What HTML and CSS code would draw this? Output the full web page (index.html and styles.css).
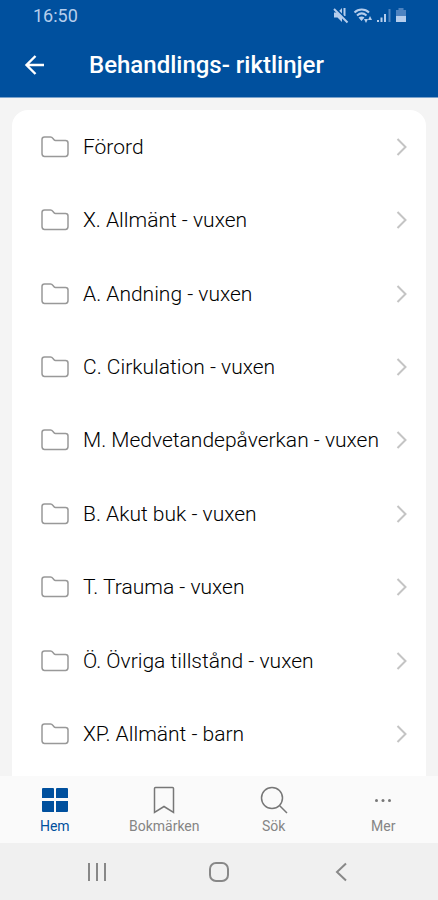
FILE: index.html
```html
<!DOCTYPE html>
<html lang="sv">
<head>
<meta charset="utf-8">
<meta name="viewport" content="width=device-width, initial-scale=1">
<title>Behandlingsriktlinjer</title>
<link rel="stylesheet" href="styles.css">
</head>
<body>
<svg class="defs" aria-hidden="true">
  <symbol id="folder" viewBox="0 0 28 22"><path d="M1 17.5V3.5C1 2 2 1 3.500 1H9.500C10.500 1 11.200 1.400 11.800 2.200L13 3.700C13.400 4.200 13.800 4.400 14.500 4.400H24.500C26 4.400 27 5.400 27 6.900V17.500C27 19.500 26.300 20.400 24.500 20.400H3.500C1.700 20.400 1 19.500 1 17.500Z"/></symbol>
  <symbol id="chevron" viewBox="0 0 12 18"><path d="M1.500 1L9.500 9L1.500 17"/></symbol>
</svg>
<header class="top">
  <div class="status">
    <span class="time">16:50</span>
    <svg class="status-icons" viewBox="0 0 76 18" aria-hidden="true">
      <path class="solid" d="M2 5.500H5.500L10 1V15L5.500 10.500H2ZM11.500 1H13.500V9H11.500Z"/>
      <path class="cut" d="M3 1L16 14"/>
      <path class="slash" d="M2 2L15.500 15.500"/>
      <path class="wave" d="M22.500 5.500C26.500 1.500 33 1.500 37 5.500M25 8.500C28 5.800 31.500 5.800 34.500 8.500"/>
      <path class="solid" d="M26.500 10.500C28.500 9 31 9 32.500 10.500L29.500 14ZM32 12H36L34 16ZM36 13L38 9L40 13Z"/>
      <path class="solid" d="M45 13H47V15H45ZM48.500 10.500H50.500V15H48.500ZM52 7H54V15H52Z"/>
      <path class="dim" d="M56.500 2H58.500V15H56.500ZM64 3H66.500V1H71.500V3H74V9H64Z"/>
      <path class="solid" d="M64 9H74V15H64Z"/>
    </svg>
  </div>
  <div class="bar">
    <button class="back" aria-label="Tillbaka"><svg viewBox="0 0 20 20" aria-hidden="true"><path d="M19.500 10H2M11 1L2 10L11 19"/></svg></button>
    <h1>Behandlings- riktlinjer</h1>
  </div>
</header>
<main>
  <ul class="list">
    <li><a href="#forord"><svg class="folder"><use href="#folder"/></svg><span>Förord</span><svg class="chevron"><use href="#chevron"/></svg></a></li>
    <li><a href="#x"><svg class="folder"><use href="#folder"/></svg><span>X. Allmänt - vuxen</span><svg class="chevron"><use href="#chevron"/></svg></a></li>
    <li><a href="#a"><svg class="folder"><use href="#folder"/></svg><span>A. Andning - vuxen</span><svg class="chevron"><use href="#chevron"/></svg></a></li>
    <li><a href="#c"><svg class="folder"><use href="#folder"/></svg><span>C. Cirkulation - vuxen</span><svg class="chevron"><use href="#chevron"/></svg></a></li>
    <li><a href="#m"><svg class="folder"><use href="#folder"/></svg><span>M. Medvetandepåverkan - vuxen</span><svg class="chevron"><use href="#chevron"/></svg></a></li>
    <li><a href="#b"><svg class="folder"><use href="#folder"/></svg><span>B. Akut buk - vuxen</span><svg class="chevron"><use href="#chevron"/></svg></a></li>
    <li><a href="#t"><svg class="folder"><use href="#folder"/></svg><span>T. Trauma - vuxen</span><svg class="chevron"><use href="#chevron"/></svg></a></li>
    <li><a href="#o"><svg class="folder"><use href="#folder"/></svg><span>Ö. Övriga tillstånd - vuxen</span><svg class="chevron"><use href="#chevron"/></svg></a></li>
    <li><a href="#xp"><svg class="folder"><use href="#folder"/></svg><span>XP. Allmänt - barn</span><svg class="chevron"><use href="#chevron"/></svg></a></li>
  </ul>
</main>
<nav class="tabs">
  <a class="tab active" href="#hem"><svg viewBox="0 0 28 28" aria-hidden="true"><path d="M2 2H12Q13 2 13 3V12H1V3Q1 2 2 2ZM16 2H26Q27 2 27 3V12H15V3Q15 2 16 2ZM1 15H13V26H2Q1 26 1 25ZM15 15H27V25Q27 26 26 26H15Z"/></svg>Hem</a>
  <a class="tab" href="#bokmarken"><svg viewBox="0 0 28 28" aria-hidden="true"><path d="M5.500 1.500H22.500Q23.500 1.500 23.500 2.500V26.500L14 20.500L4.500 26.500V2.500Q4.500 1.500 5.500 1.500Z"/></svg>Bokmärken</a>
  <a class="tab" href="#sok"><svg viewBox="0 0 28 28" aria-hidden="true"><circle cx="12" cy="12" r="10.500"/><path d="M19.500 19.500L27 27"/></svg>Sök</a>
  <a class="tab more" href="#mer"><svg viewBox="0 0 28 28" aria-hidden="true"><circle cx="7.500" cy="14.500" r="1.500"/><circle cx="14" cy="14.500" r="1.500"/><circle cx="20.500" cy="14.500" r="1.500"/></svg>Mer</a>
</nav>
<div class="system">
  <button aria-label="Senaste appar"><svg viewBox="0 0 20 20" aria-hidden="true"><path d="M2 1V19M10 1V19M18 1V19"/></svg></button>
  <button aria-label="Startskärm"><svg viewBox="0 0 20 20" aria-hidden="true"><rect x="1" y="1" width="18" height="18" rx="6"/></svg></button>
  <button aria-label="Bakåt"><svg viewBox="0 0 20 20" aria-hidden="true"><path d="M15 1.500L6 10L15 18.500"/></svg></button>
</div>
</body>
</html>
```
FILE: styles.css
```css
* { box-sizing: border-box; }
body {
  margin: 0;
  min-height: 100vh;
  display: flex;
  flex-direction: column;
  background: #f4f4f4;
  color: #222;
  font-family: Roboto, "Liberation Sans", sans-serif;
}
svg { display: block; fill: none; stroke: currentColor; stroke-width: 2; }
button { padding: 0; border: 0; background: none; color: inherit; }
a { color: inherit; text-decoration: none; }
.defs { display: none; }

.top { background: #00509e; color: #fff; border-bottom: 1px solid #7ba3cc; }
.status {
  height: 32px;
  padding: 0 30px 0 33px;
  display: flex;
  align-items: center;
  justify-content: space-between;
  color: #b5cdec;
}
.time { font-size: 18px; line-height: 32px; }
.status-icons { width: 76px; height: 18px; }
.status-icons .solid { fill: currentColor; stroke: none; }
.status-icons .dim { fill: #4e83c0; stroke: none; }
.status-icons .cut { stroke: #00509e; }
.bar { height: 65px; padding: 0 24px; display: flex; align-items: center; gap: 44px; }
.back svg { width: 21px; height: 20px; stroke-width: 2.400; }
h1 { margin: 0; font-size: 24px; line-height: 32px; font-weight: 500; }

main { flex: 1; display: flex; padding: 12px 12px 0; }
.list {
  flex: 1;
  margin: 0;
  padding: 0 0 5px;
  list-style: none;
  display: grid;
  grid-auto-rows: 1fr;
  background: #fff;
  border-radius: 16px 16px 0 0;
}
.list a { height: 100%; padding: 0 18px 0 29px; display: flex; align-items: center; gap: 14px; }
.list span { flex: 1; font-size: 21px; line-height: 28px; font-weight: 300; white-space: nowrap; color: #000; }
.folder { width: 28px; height: 22px; color: #999; stroke-width: 1.500; }
.chevron { width: 12px; height: 18px; color: #c4c4c4; stroke-width: 2; }

.tabs { height: 67px; display: grid; grid-template-columns: repeat(4, 1fr); background: #fafafa; }
.tab {
  padding-top: 10px;
  display: flex;
  flex-direction: column;
  align-items: center;
  gap: 2px;
  color: #858585;
  font-size: 14px;
  line-height: 20px;
}
.tab svg { width: 28px; height: 28px; color: #777; stroke-width: 1.500; }
.tab.active, .tab.active svg { color: #00509e; }
.tab.active svg, .tab.more svg { fill: currentColor; stroke: none; }

.system { height: 57px; padding: 0 36px; display: grid; grid-template-columns: repeat(3, 1fr); background: #f0f0f0; color: #888; }
.system button { display: grid; place-items: center; }
.system svg { width: 20px; height: 20px; }
```
